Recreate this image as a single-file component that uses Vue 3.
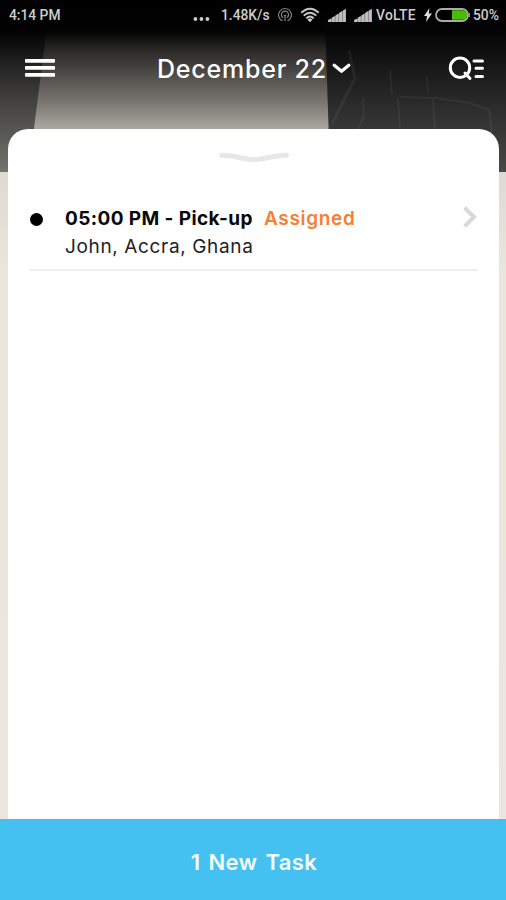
<script setup>
const tasks = [
  { time: '05:00 PM', kind: 'Pick-up', status: 'Assigned', place: 'John, Accra, Ghana' },
]
</script>

<template>
  <div class="screen">
    <svg class="backdrop" viewBox="0 0 506 900" width="506" height="900" aria-hidden="true">
      <defs>
        <linearGradient id="road" x1="0" y1="0" x2="0" y2="1">
          <stop offset="0" stop-color="#000" />
          <stop offset=".18" stop-color="#030303" />
          <stop offset=".29" stop-color="#2a2928" />
          <stop offset=".45" stop-color="#53504d" />
          <stop offset=".6" stop-color="#7b7873" />
          <stop offset=".75" stop-color="#a9a8a0" />
          <stop offset="1" stop-color="#c8c6be" />
        </linearGradient>
        <linearGradient id="left" x1="0" y1="0" x2="0" y2="1">
          <stop offset="0" stop-color="#000" />
          <stop offset=".18" stop-color="#020202" />
          <stop offset=".35" stop-color="#1e1e1e" />
          <stop offset=".58" stop-color="#41403f" />
          <stop offset=".8" stop-color="#5b5b59" />
          <stop offset="1" stop-color="#73736f" />
        </linearGradient>
        <linearGradient id="right" x1="0" y1="0" x2="0" y2="1">
          <stop offset="0" stop-color="#000" />
          <stop offset=".18" stop-color="#040404" />
          <stop offset=".45" stop-color="#1d1d1d" />
          <stop offset=".7" stop-color="#333" />
          <stop offset="1" stop-color="#484844" />
        </linearGradient>
        <linearGradient id="land" x1="0" y1="0" x2="0" y2="1">
          <stop offset="0" stop-color="#dcdbd2" />
          <stop offset=".14" stop-color="#eae6db" />
          <stop offset="1" stop-color="#ebe6df" />
        </linearGradient>
      </defs>
      <rect y="172" width="506" height="728" fill="url(#land)" />
      <rect width="506" height="172" fill="url(#road)" />
      <path d="M0 0H51L46 35L33.500 132V172H0Z" fill="url(#left)" />
      <path d="M324 0H506V172H330L327 80Z" fill="url(#right)" />
      <g fill="none" stroke="#fff" stroke-opacity=".05" stroke-width="2">
        <path d="M349 50L355 78L332 124" stroke-width="3" />
        <path d="M363 98L364 116L358 130M398 98L400 130M433 98L435 130M390 70L392 95M427 76L428 92M400 97L436 98L470 103L489 110L492 132" />
      </g>
    </svg>

    <div class="content">
      <div class="status">
        <span class="clock">4:14 PM</span>
        <svg class="dots" width="18" height="6" viewBox="0 0 18 6" fill="#ccc">
          <circle cx="2.4" cy="3" r="1.9" /><circle cx="8.4" cy="3" r="1.9" /><circle cx="14.400" cy="3" r="1.9" />
        </svg>
        <span class="speed">1.48K/s</span>
        <svg class="hotspot" width="16" height="16" viewBox="0 0 16 16" fill="none" stroke="#858585" stroke-width="1.2">
          <path d="M5.5 13.8A6.4 6.4 0 1 1 10.5 13.8M6 10.7A3.6 3.6 0 1 1 10 10.7M6.800 8.5h2.4M8 8.5v5.5" />
        </svg>
        <svg class="wifi" width="20" height="16" viewBox="0 0 20 16" fill="none" stroke="#c8c8c8" stroke-width="1.9">
          <path d="M1.3 5.8Q10-2.400 18.7 5.8M3.700 8.600Q10 2.700 16.300 8.600M6.300 11.300Q10 7.600 13.700 11.300" />
          <path d="M7.500 12.600Q10 10.600 12.500 12.600L10 15.300Z" fill="#d2d2d2" stroke="none" />
        </svg>
        <svg v-for="n in 2" :key="n" :class="['signal', 'signal-' + n]" width="18" height="13" viewBox="0 0 18 13">
          <path d="M0 12L18 0V13H0Z" fill="#777" />
          <path d="M0 11L3 9.500V13H0ZM3.7 8.800L6.7 7V13H3.7ZM7.4 6.500L10.4 4.500V13H7.4ZM11.1 4L14.1 2V13H11.1ZM14.8 1.6L17.8 0V13H14.8Z" fill="#bdbdbd" />
        </svg>
        <span class="volte">VoLTE</span>
        <svg class="bolt" width="8" height="14" viewBox="0 0 8 14" fill="#ddd">
          <path d="M5.5 0L0 8H3L2 14L8 5.5H4.7Z" />
        </svg>
        <svg class="battery" width="35" height="14" viewBox="0 0 35 14">
          <rect x="1" y="1" width="32" height="12" rx="6" fill="#000" stroke="#ababab" stroke-width="1.8" />
          <path d="M17 2.2H27.5A4.8 4.8 0 0 1 27.5 11.8H17Z" fill="#48bd08" />
          <path d="M34.2 5V9" stroke="#ababab" stroke-width="1.2" />
        </svg>
        <span class="percent">50%</span>
      </div>

      <header class="bar">
        <svg class="menu" width="30" height="20" viewBox="0 0 30 20" fill="#fff">
          <rect y="0" width="30" height="3.7" rx=".7" /><rect y="7" width="30" height="3.7" rx=".7" /><rect y="14" width="30" height="3.7" rx=".7" />
        </svg>
        <div class="date">
          <span class="date-text">December 22</span>
          <svg width="19" height="11" viewBox="0 0 19 11" fill="none" stroke="#fff" stroke-width="3.2" stroke-linecap="round" stroke-linejoin="round">
            <path d="M2.2 2.3L9.5 8.3L16.8 2.3" />
          </svg>
        </div>
        <svg class="search" width="37" height="26" viewBox="0 0 37 26" fill="none" stroke="#fff" stroke-width="3" stroke-linecap="round">
          <circle cx="12" cy="11.700" r="9.7" /><path d="M17 17L22 22.5" />
          <path d="M26 4.900H34.5M28 12.300H34.5M28 20.400H34.5" />
        </svg>
      </header>

      <main class="sheet">
        <svg class="handle" width="70" height="11" viewBox="0 0 70 11" fill="none" stroke="#e7e7e7" stroke-width="5" stroke-linecap="round" stroke-linejoin="round">
          <path d="M2.6 3.2L12 4L30 7.300Q35 8 40 7.300L58 4L67.4 3.2" />
        </svg>
        <article v-for="task in tasks" :key="task.place" class="task">
          <i class="bullet"></i>
          <div class="details">
            <div class="headline">
              <b class="title">{{ task.time }} - {{ task.kind }}</b>
              <span class="state">{{ task.status }}</span>
            </div>
            <div class="place">{{ task.place }}</div>
          </div>
          <svg class="chevron" width="14" height="22" viewBox="0 0 14 22" fill="none" stroke="#d8d8d8" stroke-width="4">
            <path d="M1.6 1.8L11 11L1.6 20.2" />
          </svg>
        </article>
      </main>

      <button class="new-task"><span>1 New Task</span></button>
    </div>
  </div>
</template>

<style>
body { margin: 0; }
</style>

<style scoped>
.screen { display: grid; width: 506px; height: 900px; overflow: hidden; font-family: Inter, "Open Sans", sans-serif; }
.backdrop, .content { grid-area: 1 / 1; }
.backdrop { display: block; }
.content { display: flex; flex-direction: column; min-width: 0; z-index: 1; }
svg { flex: none; display: block; }
span, b { white-space: nowrap; }
.status { display: flex; align-items: center; height: 30px; padding-left: 9px; color: #cdcdcd; font: 500 13.8px/30px Roboto, sans-serif; }
.clock { width: 184px; }
.dots { margin-top: 8px; }
.speed { width: 57px; margin-left: 10px; }
.hotspot { margin-left: -1px; }
.wifi { margin-left: 7px; }
.signal-1 { margin-left: 8px; }
.signal-2 { margin-left: 8px; }
.volte { width: 41px; margin-left: 4px; letter-spacing: .3px; }
.bolt { margin-left: 7px; }
.battery { margin-left: 3px; }
.percent { margin-left: 3px; }
.bar { display: flex; align-items: center; height: 77px; padding: 0 21px 0 25px; color: #fff; }
.date { display: flex; align-items: center; margin: 0 auto 0 102px; gap: 4px; }
.date-text { width: 171px; font-size: 25px; font-weight: 500; letter-spacing: .78px; }
.sheet { flex: 1; margin: 22px 7px 0 8px; padding: 23px 22px 0; background: #fff; border-radius: 20px 20px 0 0; }
.handle { margin: 0 auto; }
.task { display: flex; height: 108px; box-sizing: border-box; padding-top: 42px; border-bottom: 2px solid #eee; }
.bullet { width: 13px; height: 13px; margin: 8px 22px 0 0; border-radius: 50%; background: #000; }
.details { flex: 1; }
.headline { display: flex; height: 28px; font-size: 19px; line-height: 28px; }
.title { width: 199px; color: #080808; font-weight: 700; letter-spacing: .4px; }
.state { color: #fa7d31; font-weight: 600; letter-spacing: .66px; }
.place { font-size: 19px; line-height: 28px; color: #222; letter-spacing: .64px; }
.chevron { margin-top: 1px; }
.new-task { height: 81px; border: 0; padding: 4px 0 0 2px; background: #45c1f1; color: #f5fcff; font-family: inherit; font-size: 22px; font-weight: 600; letter-spacing: .4px; word-spacing: 2px; }
</style>
